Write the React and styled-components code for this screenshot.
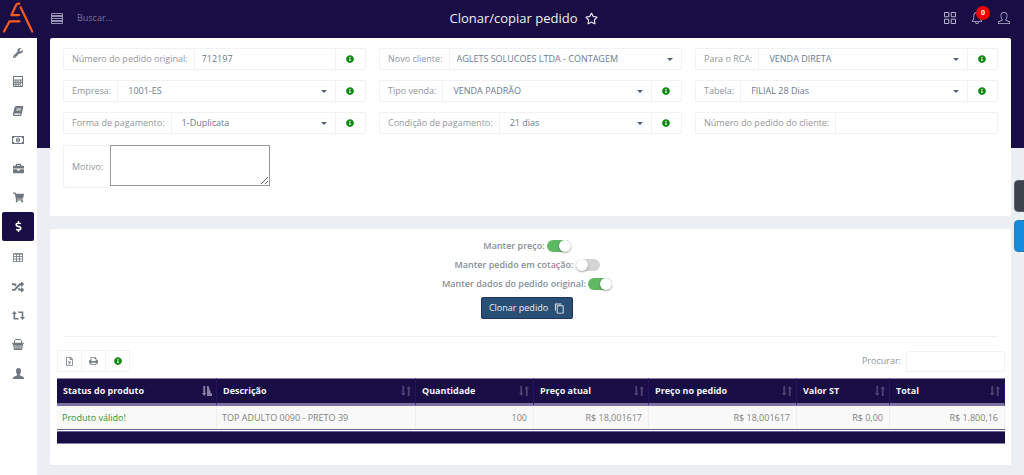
import React from "react";
import styled, { createGlobalStyle } from "styled-components";
import { FaBook, FaBriefcase, FaChevronLeft, FaDollarSign, FaInfoCircle, FaRandom, FaRegFileExcel, FaRegStar, FaShoppingCart, FaWrench } from "react-icons/fa";
import { MdContentCopy } from "react-icons/md";
import { SlBell, SlUser } from "react-icons/sl";

const color = {
  navy: "#180d45",
  page: "#ebeff4",
  line: "#f1f2f4",
  label: "#8f979e",
  value: "#6b7a90",
  icon: "#6f7882",
  info: "#0a8a0a",
  green: "#5fb962",
};

const GlobalStyle = createGlobalStyle`
  * {
    box-sizing: border-box;
  }

  body {
    margin: 0;
    background: ${color.page};
  }

  body, button, input, select, textarea {
    font-family: "Open Sans", sans-serif;
    font-size: 9px;
    line-height: 12px;
  }

  svg {
    display: block;
    flex: none;
  }
`;

const Shell = styled.div`
  display: flex;
  min-height: 100vh;
`;

const Sidebar = styled.nav`
  width: 37px;
  flex: none;
  background: #fff;
`;

const Logo = styled.a`
  display: block;
  height: 38px;
  background: ${color.navy};
`;

const NavLink = styled.a`
  display: flex;
  align-items: center;
  justify-content: center;
  height: 29px;
  margin: ${(p) => (p.$active ? "0 3px 2px 2px" : "0")};
  padding-right: ${(p) => (p.$active ? "0" : "1px")};
  border-radius: 2px;
  background: ${(p) => (p.$active ? color.navy : "transparent")};
  color: ${(p) => (p.$active ? "#fff" : color.icon)};
`;

const Main = styled.main`
  flex: 1;
  min-width: 0;
  background: linear-gradient(${color.navy} 148px, ${color.page} 148px);
`;

const Topbar = styled.header`
  display: grid;
  grid-template-columns: 1fr auto 1fr;
  align-items: center;
  height: 38px;
  padding: 0 14px 2px;
  color: #b9b5cb;
`;

const SearchArea = styled.div`
  display: flex;
  align-items: center;
  gap: 14px;
`;

const IconButton = styled.button`
  position: relative;
  display: flex;
  padding: 0;
  border: none;
  background: none;
  color: inherit;
  cursor: pointer;
`;

const Search = styled.input`
  width: 140px;
  padding: 0;
  border: none;
  outline: none;
  background: none;
  color: #fff;

  &::placeholder {
    color: #797390;
    opacity: 1;
  }
`;

const Title = styled.h1`
  display: flex;
  align-items: center;
  gap: 7px;
  margin: 0;
  padding-right: 14px;
  color: #f1f0f5;
  font-size: 13px;
  font-weight: 400;
  line-height: 18px;
`;

const Actions = styled.div`
  display: flex;
  justify-content: flex-end;
  align-items: center;
  gap: 15px;
`;

const Badge = styled.span`
  position: absolute;
  top: -6px;
  right: -7px;
  width: 14px;
  height: 14px;
  border-radius: 50%;
  background: #f90000;
  color: #fff;
  font-size: 7px;
  font-weight: 700;
  line-height: 14px;
  text-align: center;
`;

const Content = styled.div`
  display: flex;
  flex-direction: column;
  gap: 13px;
  padding: 0 13px 10px;
`;

const Card = styled.section`
  padding: ${(p) => p.$padding};
  border-radius: 2px;
  background: #fff;
`;

const FormGrid = styled.form`
  display: grid;
  grid-template-columns: repeat(3, 1fr);
  gap: 10px 13px;
`;

const Group = styled.div`
  display: flex;
  height: 22px;
  min-width: 0;
  border: 1px solid ${color.line};
  border-radius: 2px;
`;

const Label = styled.label`
  display: flex;
  align-items: center;
  flex: none;
  padding: 0 6px 0 8px;
  border-right: 1px solid ${color.line};
  color: ${color.label};
`;

const TextInput = styled.input`
  flex: 1;
  min-width: 0;
  padding: 0 7px;
  border: none;
  outline: none;
  background: none;
  color: ${color.value};
`;

const SelectBox = styled.div`
  position: relative;
  display: flex;
  flex: 1;
  min-width: 0;
`;

const Select = styled.select`
  flex: 1;
  min-width: 0;
  padding: 0 20px 1px ${(p) => p.$indent}px;
  border: none;
  outline: none;
  appearance: none;
  background: none;
  color: ${color.value};
`;

const Caret = styled.span`
  position: absolute;
  top: 9px;
  right: 8px;
  border: 3px solid transparent;
  border-top-color: #4f6178;
  border-bottom: none;
  pointer-events: none;
`;

const InfoButton = styled.button`
  display: flex;
  align-items: center;
  justify-content: center;
  flex: none;
  width: 30px;
  padding: 0 1px 0 0;
  border: none;
  border-left: 1px solid ${color.line};
  background: none;
  color: ${color.info};
`;

const ReasonGroup = styled.div`
  display: flex;
  align-items: flex-start;
  margin-top: 11px;
`;

const ReasonLabel = styled(Label)`
  height: 43px;
  padding-right: 7px;
  border: 1px solid ${color.line};
  border-right: none;
  border-radius: 2px;
`;

const Reason = styled.textarea`
  width: 160px;
  height: 41px;
  margin: 0;
  padding: 2px;
  border: 1px solid #999;
  border-radius: 0;
  color: ${color.value};
`;

const Options = styled.form`
  display: flex;
  flex-direction: column;
  align-items: center;
  padding-right: 8px;
`;

const SwitchRow = styled.label`
  display: flex;
  align-items: center;
  gap: 2px;
  height: 19px;
  color: #868f97;
  font-weight: 600;
`;

const Switch = styled.input`
  display: flex;
  align-items: center;
  width: 24px;
  height: 12px;
  margin: 0;
  border-radius: 6px;
  appearance: none;
  background: #d5d5d5;

  &::before {
    content: "";
    width: 12px;
    height: 12px;
    border-radius: 50%;
    background: #fff;
    box-shadow: 0 1px 2px rgba(0, 0, 0, 0.35);
  }

  &:checked {
    justify-content: flex-end;
    background: ${color.green};
  }
`;

const CloneButton = styled.button`
  display: flex;
  align-items: center;
  gap: 6px;
  height: 22px;
  margin-top: 4px;
  padding: 0 7px;
  border: 1px solid #20305f;
  border-radius: 2px;
  background: #2a4f74;
  color: #e9eef3;
`;

const Divider = styled.hr`
  margin: 17px 7px 13px 6px;
  border: none;
  border-top: 1px solid ${color.line};
`;

const TableBar = styled.div`
  display: flex;
  align-items: center;
  justify-content: space-between;
  margin-bottom: 6px;
`;

const Tools = styled.div`
  display: flex;
`;

const Tool = styled.button`
  display: flex;
  align-items: center;
  justify-content: center;
  width: 25px;
  height: 22px;
  padding: 0;
  border: 1px solid ${color.line};
  background: #fff;
  color: ${(p) => (p.$info ? color.info : "#7b8389")};

  & + & {
    width: 24px;
    border-left: none;
  }
`;

const Filter = styled.label`
  display: flex;
  align-items: center;
  gap: 5px;
  color: ${color.label};
`;

const FilterInput = styled.input`
  width: 99px;
  height: 21px;
  border: 1px solid ${color.line};
  border-radius: 2px;
  outline: none;
`;

const Table = styled.table`
  width: 100%;
  table-layout: fixed;
  border-collapse: separate;
  border-spacing: 0;
`;

const Th = styled.th`
  height: 28px;
  padding: 0 4px 0 6px;
  border-top: 1px solid #8880ab;
  border-right: 1px solid #25136a;
  border-bottom: 3px solid #7d74a5;
  background: ${color.navy};
  color: #f4f3f8;
  font-weight: 700;
  text-align: left;
`;

const ThInner = styled.div`
  display: flex;
  align-items: center;
  justify-content: space-between;
`;

const Td = styled.td`
  height: 23px;
  padding: 0 6px 0 5px;
  border-right: 1px solid #eeeeee;
  background: #f9f9f9;
  color: ${(p) => (p.$valid ? "#2f962f" : "#818181")};
  text-align: ${(p) => (p.$right ? "right" : "left")};
`;

const FootCell = styled.td`
  height: 15px;
  padding: 0;
  border-top: 3px double #6a6094;
  border-bottom: 1px solid #8880ab;
  background: ${color.navy};
  background-clip: padding-box;
`;

const SideTabs = styled.aside`
  position: fixed;
  top: 180px;
  right: 0;
  display: flex;
  flex-direction: column;
  gap: 8px;
  width: 10px;
  overflow: hidden;
`;

const SideTab = styled.button`
  display: flex;
  align-items: center;
  width: 32px;
  height: 32px;
  padding: 0 0 0 8px;
  border: 1px solid ${(p) => (p.$blue ? "#2b7cb5" : "#59636d")};
  border-radius: 4px;
  background: ${(p) => (p.$blue ? "#148bdb" : "#3b444d")};
  color: #a9c4e8;
`;

const LogoMark = () => (
  <svg width="37" height="38" viewBox="0 0 37 38" fill="none" stroke="#ff5a1c" strokeWidth="2.2" strokeLinecap="round" strokeLinejoin="round">
    <path d="M4 31.5 9.6 21.3H19.5M19 15.1h-7.6L16 5.2c.6-1.3 2-1.8 3.4-1.6M20.6 7.3 32.2 31.5" />
  </svg>
);

const MenuIcon = () => (
  <svg width="12" height="11" viewBox="0 0 12 11" fill="none" stroke="currentColor">
    <path d="M.5.5h11v2H.5zM.5 3.5h11M.5 5.5h11M.5 7.5h11M.5 8.5h11v2H.5zM.5 2.5v6M11.5 2.5v6" strokeWidth=".8" />
  </svg>
);

const GridIcon = () => (
  <svg width="12" height="12" viewBox="0 0 12 12" fill="none" stroke="currentColor">
    <path d="M.5.5h4.3v4.3H.5zM7.2.5h4.3v4.3H7.2zM.5 7.2h4.3v4.3H.5zM7.2 7.2h4.3v4.3H7.2z" />
  </svg>
);

const CalculatorIcon = () => (
  <svg width="10" height="11" viewBox="0 0 10 11" fill="currentColor">
    <path fillRule="evenodd" d="M.6 0h8.8c.4 0 .6.2.6.6v9.8c0 .4-.2.6-.6.6H.6C.2 11 0 10.8 0 10.4V.6C0 .2.2 0 .6 0ZM1 1v2.4h8V1ZM1.1 4.6v1.1h1.3V4.6Zm2.3 0v1.1h1.3V4.6Zm2.2 0v1.1h1.3V4.6Zm2.2 0v1.1h1.1V4.6ZM1.1 6.7v1.1h1.3V6.7Zm2.3 0v1.1h1.3V6.7Zm2.2 0v1.1h1.3V6.7Zm2.2 0V10h1.1V6.7ZM1.1 8.8v1.1h1.3V8.8Zm2.3 0v1.1h1.3V8.8Zm2.2 0v1.1h1.3V8.8Z" />
  </svg>
);

const MoneyIcon = () => (
  <svg width="12" height="8" viewBox="0 0 12 8" fill="currentColor">
    <path fillRule="evenodd" d="M0 0h12v8H0ZM2.4 1C2.4 1.800 1.800 2.300 1 2.300v3.400c.8 0 1.400.5 1.400 1.300h7.200c0-.8.6-1.300 1.400-1.300V2.300C10.200 2.300 9.600 1.800 9.600 1Z" />
    <path fillRule="evenodd" d="M6 1.400c1.300 0 2 1.200 2 2.600s-.7 2.600-2 2.600S4 5.400 4 4s.7-2.600 2-2.600Zm-.7 1.400v.6h.4v1.500h-.4v.5h1.500v-.5h-.4V2.500h-.5Z" />
  </svg>
);

const TableIcon = () => (
  <svg width="10" height="9" viewBox="0 0 10 9" fill="none" stroke="currentColor" strokeWidth=".8">
    <path d="M.5.5h9v8h-9zM.5 1.200h9M.5 3.500h9M.5 6h9M3.500 1v7.500M6.500 1v7.500" />
  </svg>
);

const RetweetIcon = () => (
  <svg width="13" height="9" viewBox="0 0 13 9" fill="currentColor">
    <path d="M2.300 0 4.800 3H3.200v3.900h2.600L7.300 8.500H1.500V3H0ZM5.500.5h5.800v5.400H13L10.500 9 8 5.900h1.700V2.100H7Z" />
  </svg>
);

const BasketIcon = () => (
  <svg width="12" height="11" viewBox="0 0 12 11" fill="currentColor">
    <path d="M2.500 4V2c0-1 .6-1.500 1.500-1.500h4c.9 0 1.500.5 1.500 1.500v2" fill="none" stroke="currentColor" />
    <path fillRule="evenodd" d="M.3 3.800h11.400v1.500H11L10.100 11H1.900L1 5.300H.3ZM2.600 6.200l.3 3.600h.6l-.2-3.600Zm2.100 0v3.600h.6V6.200Zm2 0v3.600h.6V6.200Zm2 0-.2 3.600h.6l.3-3.600Z" />
  </svg>
);

const PersonIcon = () => (
  <svg width="11" height="11" viewBox="0 0 11 11" fill="currentColor">
    <path d="M5.500 0C7.200 0 8 1.200 8 3c0 1.600-.6 2.700-1.100 3.300-.3.500-.1 1.100.4 1.300L10 8.700c.7.3 1 .7 1 1.300v1H0v-1c0-.6.3-1 1-1.300l2.700-1.100c.5-.2.7-.8.4-1.300C3.600 5.700 3 4.600 3 3c0-1.800.8-3 2.500-3Z" />
  </svg>
);

const PrintIcon = () => (
  <svg width="9" height="8" viewBox="0 0 9 8" fill="currentColor">
    <path fillRule="evenodd" d="M1.500 0h4.800l1.200 1.200V3h.3C8.600 3 9 3.500 9 4.200v2.300H7.500V8h-6V6.500H0V4.200C0 3.500.4 3 1.200 3h.3Zm.9.8V4h4.200V1.900H5.500V.8ZM2.400 5.700v1.500h4.200V5.700Z" />
  </svg>
);

const SortIcon = ({ sorted }) =>
  sorted ? (
    <svg width="10" height="10" viewBox="0 0 10 10" fill="#8781a3">
      <path d="M1.300 0h1.900v7h1.300L2.200 10 0 7h1.300ZM5 0h1.800v2.300h.9v2.500h.9v2.500H10V10H5Z" />
    </svg>
  ) : (
    <svg width="10" height="10" viewBox="0 0 10 10" fill="#4a4270">
      <path d="M1.300 0h1.900v7h1.300L2.200 10 0 7h1.300ZM7.700 0 10 3H8.700v7H6.800V3H5.500Z" />
    </svg>
  );

const navItems = [
  { name: "Ferramentas", icon: <FaWrench size={10} /> },
  { name: "Calculadora", icon: <CalculatorIcon /> },
  { name: "Catálogo", icon: <FaBook size={10} style={{ transform: "skewX(-12deg)" }} /> },
  { name: "Financeiro", icon: <MoneyIcon /> },
  { name: "Negócios", icon: <FaBriefcase size={11} /> },
  { name: "Compras", icon: <FaShoppingCart size={11} /> },
  { name: "Vendas", icon: <FaDollarSign size={11} />, active: true },
  { name: "Tabelas", icon: <TableIcon /> },
  { name: "Trocas", icon: <FaRandom size={12} /> },
  { name: "Devoluções", icon: <RetweetIcon /> },
  { name: "Cesta", icon: <BasketIcon /> },
  { name: "Usuário", icon: <PersonIcon /> },
];

const fields = [
  { id: "original", label: "Número do pedido original:", value: "712197", text: true, info: true },
  { id: "cliente", label: "Novo cliente:", value: "AGLETS SOLUCOES LTDA - CONTAGEM", indent: 7 },
  { id: "rca", label: "Para o RCA:", value: "VENDA DIRETA", info: true },
  { id: "empresa", label: "Empresa:", value: "1001-ES", info: true },
  { id: "tipo", label: "Tipo venda:", value: "VENDA PADRÃO", info: true },
  { id: "tabela", label: "Tabela:", value: "FILIAL 28 Dias", info: true },
  { id: "forma", label: "Forma de pagamento:", value: "1-Duplicata", info: true },
  { id: "condicao", label: "Condição de pagamento:", value: "21 dias", info: true },
  { id: "numero", label: "Número do pedido do cliente:", value: "", text: true },
];

const columns = [
  { title: "Status do produto", width: 160, value: "Produto válido!" },
  { title: "Descrição", width: 199, value: "TOP ADULTO 0090 - PRETO 39" },
  { title: "Quantidade", width: 118, value: "100" },
  { title: "Preço atual", width: 115, value: "R$ 18,001617" },
  { title: "Preço no pedido", width: 148, value: "R$ 18,001617" },
  { title: "Valor ST", width: 93, value: "R$ 0,00" },
  { title: "Total", width: 115, value: "R$ 1.800,16" },
];

const totalWidth = columns.reduce((sum, c) => sum + c.width, 0);

const Field = ({ id, label, value, text, info, indent = 10 }) => (
  <Group>
    <Label htmlFor={id}>{label}</Label>
    {text ? (
      <TextInput id={id} defaultValue={value} />
    ) : (
      <SelectBox>
        <Select id={id} $indent={indent}>
          <option>{value}</option>
        </Select>
        <Caret />
      </SelectBox>
    )}
    {info && (
      <InfoButton type="button" aria-label="Informação">
        <FaInfoCircle size={8} />
      </InfoButton>
    )}
  </Group>
);

const App = () => (
  <>
    <GlobalStyle />
    <Shell>
      <Sidebar>
        <Logo href="#" aria-label="Início">
          <LogoMark />
        </Logo>
        {navItems.map((item) => (
          <NavLink key={item.name} href="#" aria-label={item.name} $active={item.active}>
            {item.icon}
          </NavLink>
        ))}
      </Sidebar>
      <Main>
        <Topbar>
          <SearchArea>
            <IconButton aria-label="Menu">
              <MenuIcon />
            </IconButton>
            <Search aria-label="Buscar" placeholder="Buscar..." />
          </SearchArea>
          <Title>
            Clonar/copiar pedido <FaRegStar size={13} />
          </Title>
          <Actions>
            <IconButton aria-label="Aplicativos">
              <GridIcon />
            </IconButton>
            <IconButton aria-label="Notificações">
              <SlBell size={12} />
              <Badge>0</Badge>
            </IconButton>
            <IconButton aria-label="Perfil">
              <SlUser size={12} />
            </IconButton>
          </Actions>
        </Topbar>
        <Content>
          <Card $padding="10px 13px 28px">
            <FormGrid>
              {fields.map((field) => (
                <Field key={field.id} {...field} />
              ))}
            </FormGrid>
            <ReasonGroup>
              <ReasonLabel htmlFor="motivo">Motivo:</ReasonLabel>
              <Reason id="motivo" />
            </ReasonGroup>
          </Card>
          <Card $padding="7px 6px 21px 7px">
            <Options>
              <SwitchRow>
                Manter preço: <Switch type="checkbox" defaultChecked />
              </SwitchRow>
              <SwitchRow>
                Manter pedido em cotação: <Switch type="checkbox" />
              </SwitchRow>
              <SwitchRow>
                Manter dados do pedido original: <Switch type="checkbox" defaultChecked />
              </SwitchRow>
              <CloneButton type="button">
                Clonar pedido <MdContentCopy size={11} />
              </CloneButton>
            </Options>
            <Divider />
            <TableBar>
              <Tools>
                <Tool aria-label="Exportar">
                  <FaRegFileExcel size={9} />
                </Tool>
                <Tool aria-label="Imprimir">
                  <PrintIcon />
                </Tool>
                <Tool aria-label="Informação" $info>
                  <FaInfoCircle size={8} />
                </Tool>
              </Tools>
              <Filter>
                Procurar: <FilterInput />
              </Filter>
            </TableBar>
            <Table>
              <colgroup>
                {columns.map((c) => (
                  <col key={c.title} style={{ width: `${(c.width / totalWidth) * 100}%` }} />
                ))}
              </colgroup>
              <thead>
                <tr>
                  {columns.map((c, i) => (
                    <Th key={c.title}>
                      <ThInner>
                        {c.title} <SortIcon sorted={i === 0} />
                      </ThInner>
                    </Th>
                  ))}
                </tr>
              </thead>
              <tbody>
                <tr>
                  {columns.map((c, i) => (
                    <Td key={c.title} $valid={i === 0} $right={i > 1}>
                      {c.value}
                    </Td>
                  ))}
                </tr>
              </tbody>
              <tfoot>
                <tr>
                  <FootCell colSpan={columns.length} />
                </tr>
              </tfoot>
            </Table>
          </Card>
        </Content>
      </Main>
    </Shell>
    <SideTabs>
      <SideTab aria-label="Abrir painel">
        <FaChevronLeft size={6} />
      </SideTab>
      <SideTab aria-label="Ajuda" $blue />
    </SideTabs>
  </>
);

export default App;
